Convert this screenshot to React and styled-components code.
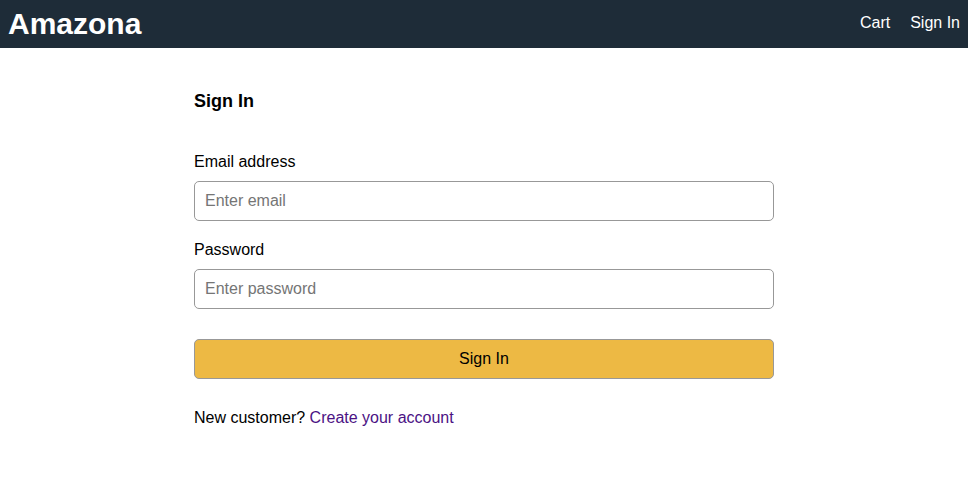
import React from "react";
import styled, { createGlobalStyle } from "styled-components";

const GlobalStyle = createGlobalStyle`
  *, *::before, *::after { box-sizing: border-box; }
  body {
    margin: 0;
    background: #ffffff;
    color: #000000;
    font-family: "Liberation Sans", Helvetica, Arial, sans-serif;
    font-size: 16px;
    line-height: 18px;
  }
`;

const Header = styled.header`
  display: flex;
  align-items: center;
  justify-content: space-between;
  padding: 0 8px;
  height: 48px;
  background: #1e2c38;
`;

const Brand = styled.a`
  color: #ffffff;
  font-size: 30px;
  line-height: 36px;
  font-weight: bold;
  text-decoration: none;
`;

const Nav = styled.nav`
  display: flex;
  gap: 20px;
  padding-bottom: 2px;
`;

const NavLink = styled.a`
  color: #ffffff;
  text-decoration: none;
`;

const Form = styled.form`
  display: flex;
  flex-direction: column;
  max-width: 600px;
  margin: 0 auto;
  padding: 44px 10px;
`;

const Title = styled.h1`
  margin: 0 0 43px;
  font-size: 18px;
  line-height: 18px;
`;

const Field = styled.div`
  display: flex;
  flex-direction: column;
  gap: 10px;
  margin-bottom: ${({ $last }) => ($last ? 30 : 20)}px;
`;

const Input = styled.input`
  width: 100%;
  height: 40px;
  padding: 0 10px;
  border: 1px solid #989898;
  border-radius: 5px;
  background: #ffffff;
  font: inherit;
  &::placeholder { color: #757575; }
`;

const Submit = styled.button`
  width: 100%;
  height: 40px;
  border: 1px solid #989898;
  border-radius: 5px;
  background: #edb944;
  color: #000000;
  font: inherit;
  cursor: pointer;
`;

const Footnote = styled.p`
  margin: 30px 0 0;
`;

const AccountLink = styled.a`
  color: #4b1284;
  text-decoration: none;
`;

export default function App() {
  return (
    <>
      <GlobalStyle />
      <Header>
        <Brand href="#home">Amazona</Brand>
        <Nav>
          <NavLink href="#cart">Cart</NavLink>
          <NavLink href="#signin">Sign In</NavLink>
        </Nav>
      </Header>
      <main>
        <Form onSubmit={(event) => event.preventDefault()}>
          <Title>Sign In</Title>
          <Field>
            <label htmlFor="email">Email address</label>
            <Input id="email" type="email" placeholder="Enter email" />
          </Field>
          <Field $last>
            <label htmlFor="password">Password</label>
            <Input id="password" type="password" placeholder="Enter password" />
          </Field>
          <Submit type="submit">Sign In</Submit>
          <Footnote>
            New customer? <AccountLink href="#register">Create your account</AccountLink>
          </Footnote>
        </Form>
      </main>
    </>
  );
}
